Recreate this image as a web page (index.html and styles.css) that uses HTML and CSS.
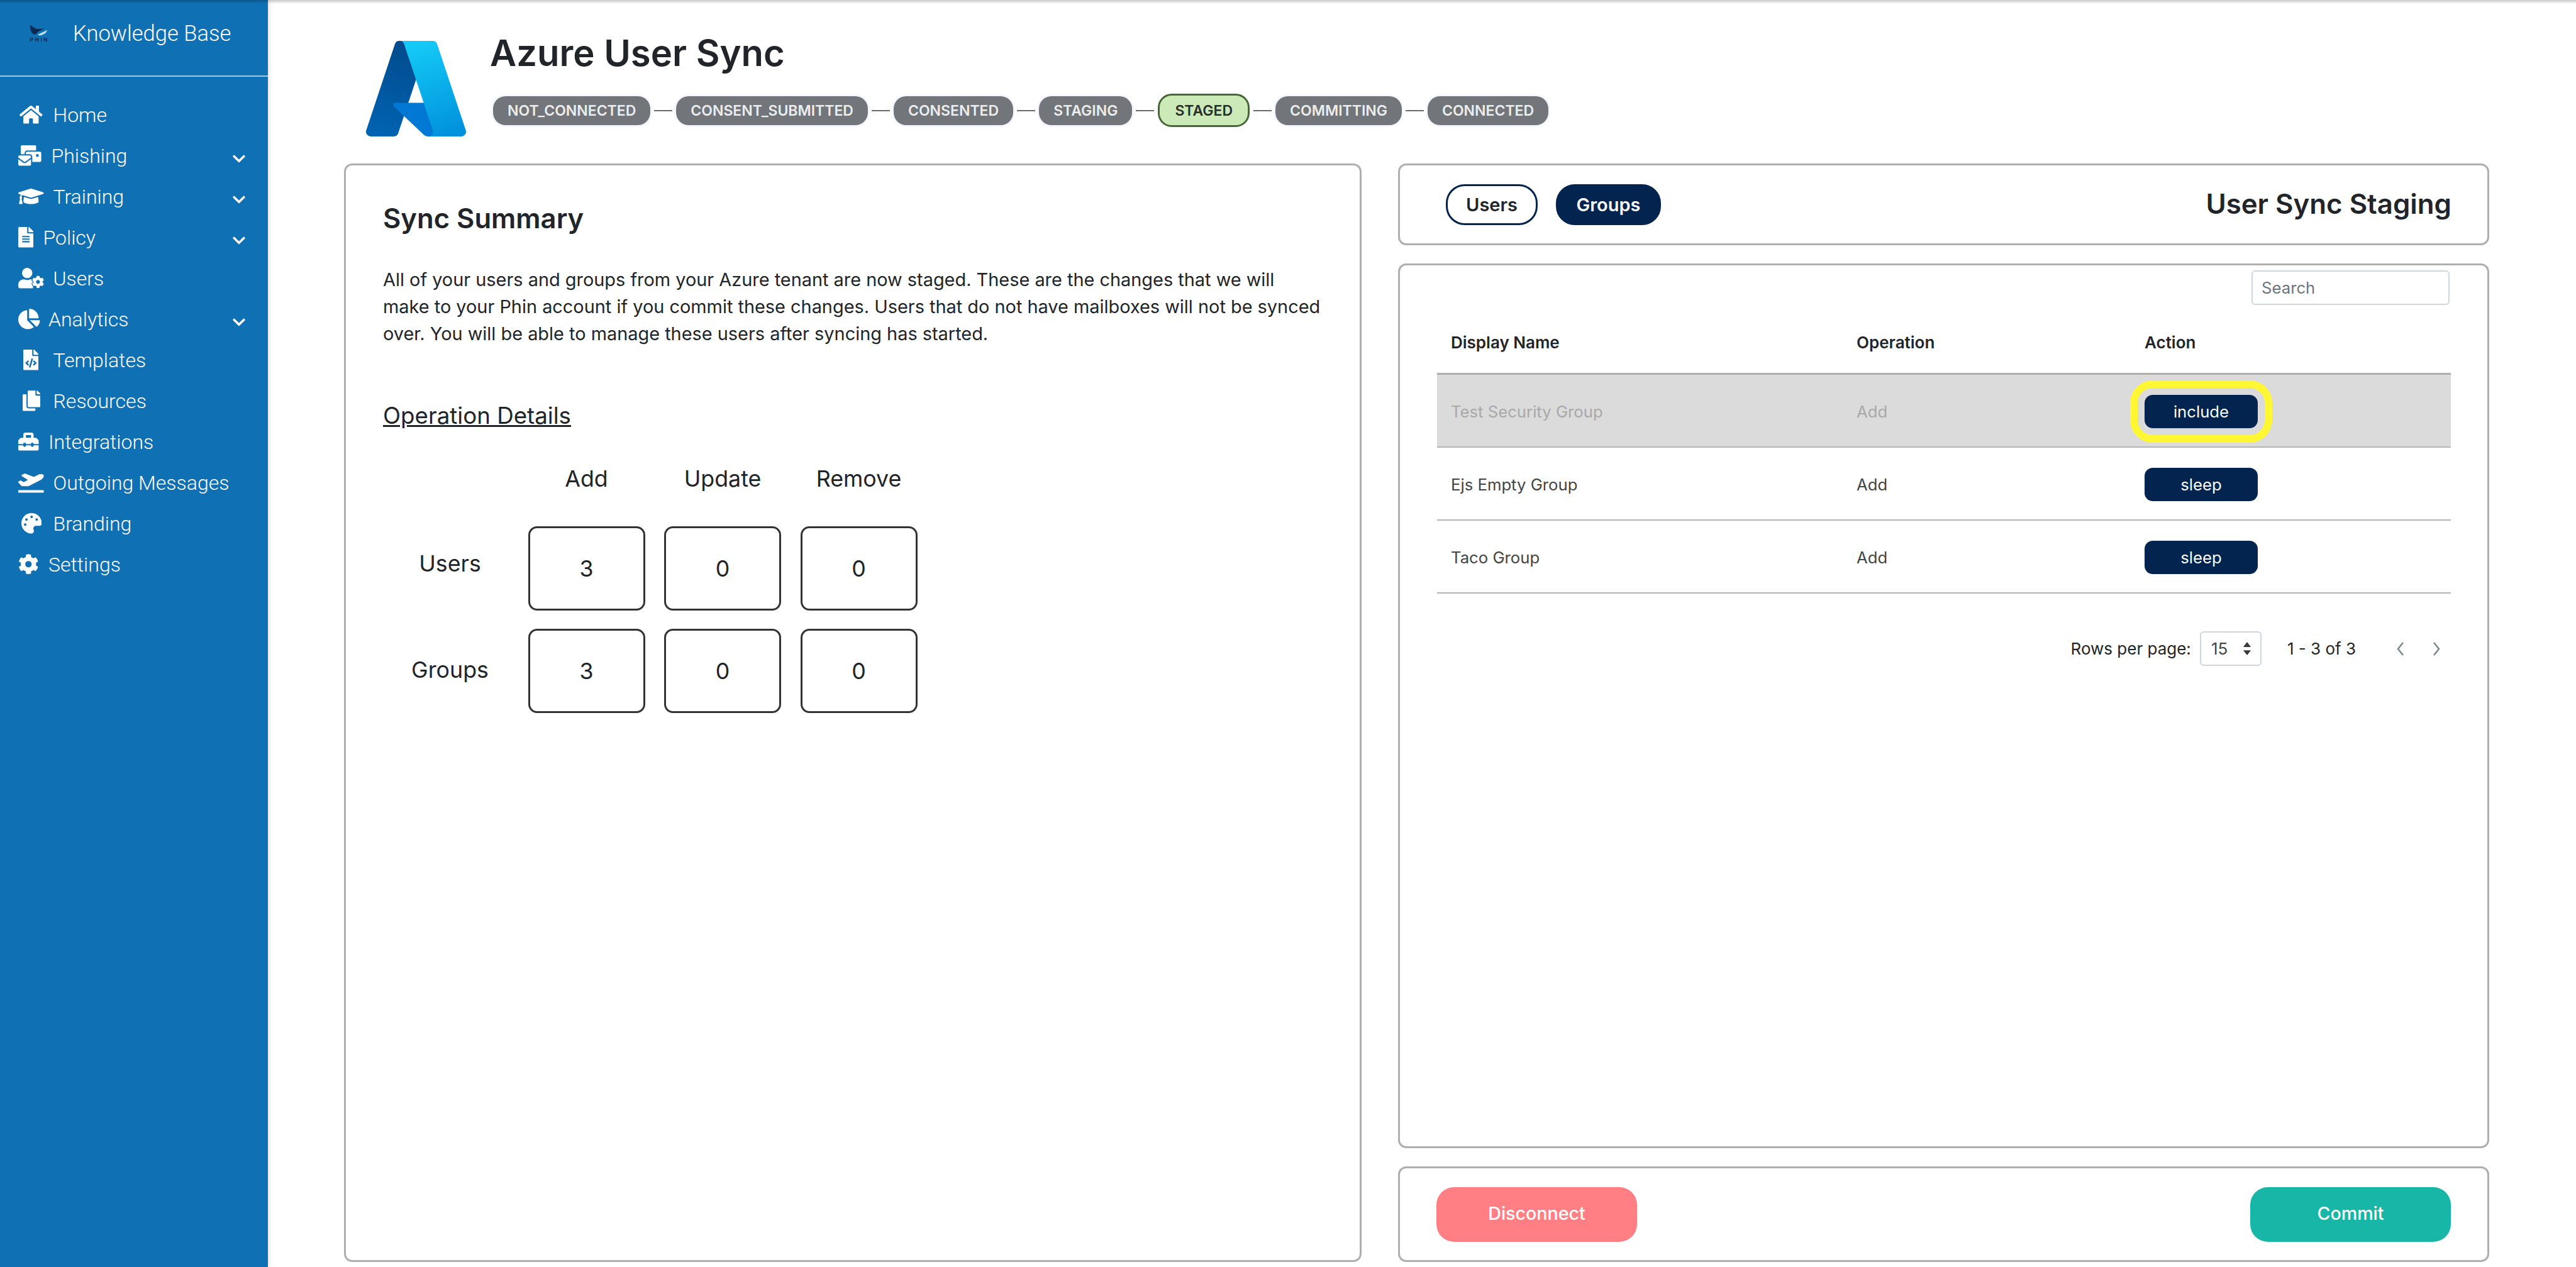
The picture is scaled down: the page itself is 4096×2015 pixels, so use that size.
FILE: index.html
```html
<!DOCTYPE html>
<html lang="en">
<head>
<meta charset="utf-8">
<title>Azure User Sync</title>
<link rel="stylesheet" href="styles.css">
</head>
<body>
<div class="app">
  <aside class="sidebar">
    <div class="brand">
      <svg class="brand-logo" viewBox="0 0 32 31">
        <path d="M.7.3L4.7 3.7 12 7.7h9.3L26 7l-5 2.7-5 2.3-5 5-2.3.7-4-2.4L2 10.3z" fill="#0c2a52"/>
        <path d="M14.7 17.7l6.6-3.4 10-4.6L28 15.3l-6.7 3.4-5.3.3z" fill="#bfe3e3"/>
        <text class="brand-mark" x="0.5" y="30" textLength="31">PHIN</text>
      </svg>
      <span class="brand-name">Knowledge Base</span>
    </div>
    <nav class="nav">
      <a class="nav-item"><span class="slot slot-l"><svg class="ico ind-xs" viewBox="0 0 576 512"><path d="M280.37 148.26L96 300.11V464a16 16 0 0 0 16 16l112.06-.29a16 16 0 0 0 15.92-16V368a16 16 0 0 1 16-16h64a16 16 0 0 1 16 16v95.64a16 16 0 0 0 16 16.05L464 480a16 16 0 0 0 16-16V300L295.67 148.26a12.19 12.19 0 0 0-15.3 0zM571.6 251.47L488 182.56V44.05a12 12 0 0 0-12-12h-56a12 12 0 0 0-12 12v72.61L318.47 43a48 48 0 0 0-61 0L4.34 251.47a12 12 0 0 0-1.6 16.9l25.5 31A12 12 0 0 0 45.15 301l235.22-193.74a12.19 12.19 0 0 1 15.3 0L530.9 301a12 12 0 0 0 16.9-1.6l25.5-31a12 12 0 0 0-1.7-16.93z"/></svg></span>Home</a>
      <a class="nav-item"><span class="slot slot-m"><svg class="ico" viewBox="0 0 576 512"><path d="M160 448c-25.6 0-51.2-22.4-64-32-64-44.8-83.2-60.8-96-70.4V480c0 17.67 14.33 32 32 32h256c17.67 0 32-14.33 32-32V345.6c-12.8 9.6-32 25.6-96 70.4-12.8 9.6-38.4 32-64 32zm128-192H32c-17.67 0-32 14.33-32 32v16c25.6 19.2 22.4 19.2 115.2 86.4 9.6 6.4 28.8 25.6 44.8 25.6s35.2-19.2 44.8-22.4c92.8-67.2 89.6-67.2 115.2-86.4V288c0-17.67-14.33-32-32-32zm256-96H224c-17.67 0-32 14.33-32 32v32h96c33.21 0 60.59 25.42 63.71 57.82l.29-.22V416h192c17.67 0 32-14.33 32-32V192c0-17.67-14.33-32-32-32zm-32 128h-64v-64h64v64zm-352-96c0-35.29 28.71-64 64-64h224V32c0-17.67-14.33-32-32-32H96C78.33 0 64 14.33 64 32v192h96v-32z"/></svg></span>Phishing<svg class="chev" viewBox="0 0 448 512"><path d="M207.029 381.476L12.686 187.132c-9.373-9.373-9.373-24.569 0-33.941l22.667-22.667c9.357-9.357 24.522-9.375 33.901-.04L224 284.505l154.745-154.021c9.379-9.335 24.544-9.317 33.901.04l22.667 22.667c9.373 9.373 9.373 24.569 0 33.941L240.971 381.476c-9.373 9.372-24.569 9.372-33.942 0z"/></svg></a>
      <a class="nav-item"><span class="slot slot-l"><svg class="ico" viewBox="0 0 640 512"><path d="M622.34 153.2L343.4 67.5c-15.2-4.67-31.6-4.67-46.79 0L17.66 153.2c-23.54 7.23-23.54 38.36 0 45.59l48.63 14.94c-10.67 13.19-17.23 29.28-17.88 46.9C38.78 266.15 32 276.11 32 288c0 10.78 5.68 19.85 13.86 25.65L20.33 428.53C18.11 438.52 25.71 448 35.94 448h56.11c10.24 0 17.84-9.48 15.62-19.47L82.14 313.65C90.32 307.85 96 298.78 96 288c0-11.57-6.47-21.25-15.66-26.87.76-15.02 8.44-28.3 20.69-36.72L296.6 284.5c9.06 2.78 26.44 6.25 46.79 0l278.95-85.7c23.55-7.24 23.55-38.36 0-45.6zM352.79 315.09c-28.53 8.76-52.84 3.92-65.59 0l-145.02-44.55L128 384c0 35.35 85.96 64 192 64s192-28.65 192-64l-14.18-113.47-145.03 44.56z"/></svg></span>Training<svg class="chev" viewBox="0 0 448 512"><path d="M207.029 381.476L12.686 187.132c-9.373-9.373-9.373-24.569 0-33.941l22.667-22.667c9.357-9.357 24.522-9.375 33.901-.04L224 284.505l154.745-154.021c9.379-9.335 24.544-9.317 33.901.04l22.667 22.667c9.373 9.373 9.373 24.569 0 33.941L240.971 381.476c-9.373 9.372-24.569 9.372-33.942 0z"/></svg></a>
      <a class="nav-item"><span class="slot slot-s"><svg class="ico" viewBox="0 0 384 512"><path d="M224 136V0H24C10.7 0 0 10.7 0 24v464c0 13.3 10.7 24 24 24h336c13.3 0 24-10.7 24-24V160H248c-13.2 0-24-10.8-24-24zm64 236c0 6.6-5.4 12-12 12H108c-6.6 0-12-5.4-12-12v-8c0-6.6 5.4-12 12-12h168c6.6 0 12 5.4 12 12v8zm0-64c0 6.6-5.4 12-12 12H108c-6.6 0-12-5.4-12-12v-8c0-6.6 5.4-12 12-12h168c6.6 0 12 5.4 12 12v8zm0-72v8c0 6.6-5.4 12-12 12H108c-6.6 0-12-5.4-12-12v-8c0-6.6 5.4-12 12-12h168c6.6 0 12 5.4 12 12zm96-114.1v6.1H256V0h6.1c6.4 0 12.5 2.5 17 7l97.9 98c4.5 4.5 7 10.6 7 16.9z"/></svg></span>Policy<svg class="chev" viewBox="0 0 448 512"><path d="M207.029 381.476L12.686 187.132c-9.373-9.373-9.373-24.569 0-33.941l22.667-22.667c9.357-9.357 24.522-9.375 33.901-.04L224 284.505l154.745-154.021c9.379-9.335 24.544-9.317 33.901.04l22.667 22.667c9.373 9.373 9.373 24.569 0 33.941L240.971 381.476c-9.373 9.372-24.569 9.372-33.942 0z"/></svg></a>
      <a class="nav-item"><span class="slot slot-l"><svg class="ico" viewBox="0 0 640 512"><path d="M224 256c70.7 0 128-57.3 128-128S294.7 0 224 0 96 57.3 96 128s57.3 128 128 128z"/><path d="M134.4 288h16.7c22.2 10.2 46.9 16 72.9 16s50.7-5.8 72.9-16h16.7c20 0 39 4.4 56 12.4V512H48c-26.5 0-48-21.5-48-48v-41.6C0 348.2 60.2 288 134.4 288z"/><path class="cog-gap" d="M610.5 373.3c2.6-14.1 2.6-28.5 0-42.6l25.8-14.9c3-1.7 4.3-5.2 3.3-8.5-6.7-21.6-18.2-41.2-33.2-57.4-2.3-2.5-6-3.1-9-1.4l-25.8 14.9c-10.9-9.3-23.4-16.5-36.9-21.3v-29.8c0-3.4-2.4-6.4-5.7-7.1-22.3-5-45-4.8-66.2 0-3.3.7-5.7 3.7-5.7 7.1v29.8c-13.5 4.8-26 12-36.9 21.3l-25.8-14.9c-2.9-1.7-6.7-1.1-9 1.4-15 16.2-26.5 35.8-33.2 57.4-1 3.3.4 6.8 3.3 8.5l25.8 14.9c-2.6 14.1-2.6 28.5 0 42.6l-25.8 14.9c-3 1.7-4.3 5.2-3.3 8.5 6.7 21.6 18.2 41.1 33.2 57.4 2.3 2.5 6 3.1 9 1.4l25.8-14.9c10.9 9.3 23.4 16.5 36.9 21.3v29.8c0 3.4 2.4 6.4 5.7 7.1 22.3 5 45 4.8 66.2 0 3.3-.7 5.7-3.7 5.7-7.1v-29.8c13.5-4.8 26-12 36.9-21.3l25.8 14.9c2.9 1.7 6.7 1.1 9-1.4 15-16.2 26.5-35.8 33.2-57.4 1-3.3-.4-6.8-3.3-8.5l-25.8-14.9zM496 400.5c-26.8 0-48.5-21.8-48.5-48.5s21.8-48.5 48.5-48.5 48.5 21.8 48.5 48.5-21.7 48.5-48.5 48.5z"/></svg></span>Users</a>
      <a class="nav-item"><span class="slot slot-n"><svg class="ico" viewBox="0 0 544 512"><path d="M527.79 288H290.5l158.03 158.03c6.04 6.04 15.98 6.53 22.19.68 38.7-36.46 65.32-85.61 73.13-140.86 1.34-9.46-6.51-17.85-16.06-17.85zm-15.83-64.8C503.72 103.74 408.26 8.28 288.8.04 279.68-.59 272 7.1 272 16.24V240h223.77c9.14 0 16.82-7.68 16.19-16.8zM224 288V50.71c0-9.55-8.39-17.4-17.84-16.06C86.99 51.49-4.1 155.6.14 280.37 4.5 408.51 114.83 513.59 243.03 511.98c50.4-.63 96.97-16.87 135.26-44.03 7.9-5.6 8.42-17.23 1.57-24.08L224 288z"/></svg></span>Analytics<svg class="chev" viewBox="0 0 448 512"><path d="M207.029 381.476L12.686 187.132c-9.373-9.373-9.373-24.569 0-33.941l22.667-22.667c9.357-9.357 24.522-9.375 33.901-.04L224 284.505l154.745-154.021c9.379-9.335 24.544-9.317 33.901.04l22.667 22.667c9.373 9.373 9.373 24.569 0 33.941L240.971 381.476c-9.373 9.372-24.569 9.372-33.942 0z"/></svg></a>
      <a class="nav-item"><span class="slot slot-l"><svg class="ico ind-l" viewBox="0 0 384 512"><path d="M384 121.941V128H256V0h6.059c6.365 0 12.47 2.529 16.971 7.029l97.941 97.941A24.002 24.002 0 0 1 384 121.941zM248 160c-13.2 0-24-10.8-24-24V0H24C10.745 0 0 10.745 0 24v464c0 13.255 10.745 24 24 24h336c13.255 0 24-10.745 24-24V160H248zM123.206 400.505a5.4 5.4 0 0 1-7.633.246l-64.866-60.812a5.4 5.4 0 0 1 0-7.879l64.866-60.812a5.4 5.4 0 0 1 7.633.246l19.579 20.885a5.4 5.4 0 0 1-.372 7.747L101.65 336l40.763 35.874a5.4 5.4 0 0 1 .372 7.747l-19.579 20.884zm51.295 50.479l-27.453-7.97a5.402 5.402 0 0 1-3.681-6.692l61.44-211.626a5.402 5.402 0 0 1 6.692-3.681l27.452 7.97a5.4 5.4 0 0 1 3.68 6.692l-61.44 211.626a5.397 5.397 0 0 1-6.69 3.681zm160.792-111.045l-64.866 60.812a5.4 5.4 0 0 1-7.633-.246l-19.58-20.885a5.4 5.4 0 0 1 .372-7.747L284.35 336l-40.763-35.874a5.4 5.4 0 0 1-.372-7.747l19.58-20.885a5.4 5.4 0 0 1 7.633-.246l64.866 60.812a5.4 5.4 0 0 1-.001 7.879z"/></svg></span>Templates</a>
      <a class="nav-item"><span class="slot slot-l"><svg class="ico ind-m" viewBox="0 0 448 512"><path d="M320 448v40c0 13.255-10.745 24-24 24H24c-13.255 0-24-10.745-24-24V120c0-13.255 10.745-24 24-24h72v296c0 30.879 25.121 56 56 56h168zm0-344V0H152c-13.255 0-24 10.745-24 24v368c0 13.255 10.745 24 24 24h272c13.255 0 24-10.745 24-24V128H344c-13.2 0-24-10.8-24-24zm120.971-31.029L375.029 7.029A24 24 0 0 0 358.059 0H352v96h96v-6.059a24 24 0 0 0-7.029-16.97z"/></svg></span>Resources</a>
      <a class="nav-item"><span class="slot slot-n"><svg class="ico" viewBox="0 0 512 512"><path d="M502.63 214.63l-45.25-45.25c-6-6-14.14-9.37-22.63-9.37H384V80c0-26.51-21.49-48-48-48H176c-26.51 0-48 21.49-48 48v80H77.25c-8.49 0-16.62 3.37-22.63 9.37L9.37 214.63c-6 6-9.37 14.14-9.37 22.63V320h128v-16c0-8.84 7.16-16 16-16h32c8.84 0 16 7.16 16 16v16h128v-16c0-8.84 7.16-16 16-16h32c8.84 0 16 7.16 16 16v16h128v-82.75c0-8.48-3.37-16.62-9.37-22.62zM320 160H192V96h128v64zm64 208c0 8.84-7.16 16-16 16h-32c-8.84 0-16-7.16-16-16v-16H192v16c0 8.84-7.16 16-16 16h-32c-8.84 0-16-7.16-16-16v-16H0v96c0 17.67 14.33 32 32 32h448c17.67 0 32-14.33 32-32v-96H384v16z"/></svg></span>Integrations</a>
      <a class="nav-item"><span class="slot slot-l"><svg class="ico" viewBox="0 0 640 512"><path d="M624 448H16c-8.84 0-16 7.16-16 16v32c0 8.84 7.16 16 16 16h608c8.84 0 16-7.16 16-16v-32c0-8.84-7.16-16-16-16zM80.55 341.27c6.28 6.84 15.1 10.72 24.33 10.71l130.54-.18a65.62 65.62 0 0 0 29.64-7.12l290.96-147.65c26.74-13.57 50.71-32.94 67.02-58.31 18.31-28.48 20.3-49.09 13.07-63.65-7.21-14.57-24.74-25.27-58.25-27.45-29.85-1.94-59.54 5.92-86.28 19.48l-98.51 49.99-218.7-82.06a17.799 17.799 0 0 0-18-1.11L90.62 67.29c-10.67 5.41-13.25 19.65-5.17 28.53l156.22 98.1-103.21 52.38-72.35-36.47a17.804 17.804 0 0 0-16.07.02L9.91 230.22c-10.44 5.3-13.19 19.12-5.57 28.08l76.21 82.97z"/></svg></span>Outgoing Messages</a>
      <a class="nav-item"><span class="slot slot-l"><svg class="ico ind-s" viewBox="0 0 512 512"><path d="M204.3 5C104.9 24.4 24.8 104.3 5.2 203.4c-37 187 131.7 326.4 258.8 306.7 41.2-6.4 61.4-54.6 42.5-91.7-23.1-45.4 9.9-98.4 60.9-98.4h79.7c35.8 0 64.8-29.6 64.9-65.3C511.5 97.1 368.1-26.9 204.3 5zM96 320c-17.7 0-32-14.3-32-32s14.3-32 32-32 32 14.3 32 32-14.3 32-32 32zm32-128c-17.7 0-32-14.3-32-32s14.3-32 32-32 32 14.3 32 32-14.3 32-32 32zm128-64c-17.7 0-32-14.3-32-32s14.3-32 32-32 32 14.3 32 32-14.3 32-32 32zm128 64c-17.7 0-32-14.3-32-32s14.3-32 32-32 32 14.3 32 32-14.3 32-32 32z"/></svg></span>Branding</a>
      <a class="nav-item"><span class="slot slot-n"><svg class="ico" viewBox="0 0 512 512"><path d="M487.4 315.7l-42.6-24.6c4.3-23.2 4.3-47 0-70.2l42.6-24.6c4.9-2.8 7.1-8.6 5.5-14-11.1-35.6-30-67.8-54.7-94.6-3.8-4.1-10-5.1-14.8-2.3L380.8 110c-17.9-15.4-38.5-27.3-60.8-35.1V25.8c0-5.6-3.9-10.5-9.4-11.7-36.7-8.2-74.3-7.8-109.2 0-5.5 1.2-9.4 6.1-9.4 11.7V75c-22.2 7.9-42.8 19.8-60.8 35.1L88.7 85.5c-4.9-2.8-11-1.9-14.8 2.3-24.7 26.7-43.6 58.9-54.7 94.6-1.7 5.4.6 11.2 5.5 14L67.3 221c-4.3 23.2-4.3 47 0 70.2l-42.6 24.6c-4.9 2.8-7.1 8.6-5.5 14 11.1 35.6 30 67.8 54.7 94.6 3.8 4.1 10 5.1 14.8 2.3l42.6-24.6c17.9 15.4 38.5 27.3 60.8 35.1v49.2c0 5.6 3.9 10.5 9.4 11.7 36.7 8.2 74.3 7.8 109.2 0 5.5-1.2 9.4-6.1 9.4-11.7v-49.2c22.2-7.9 42.8-19.8 60.8-35.1l42.6 24.6c4.9 2.8 11 1.9 14.8-2.3 24.7-26.7 43.6-58.9 54.7-94.6 1.5-5.5-.7-11.3-5.6-14.1zM256 336c-44.1 0-80-35.9-80-80s35.9-80 80-80 80 35.9 80 80-35.9 80-80 80z"/></svg></span>Settings</a>
    </nav>
  </aside>
  <main class="main">
    <header class="page-head">
      <svg class="azure-logo" viewBox="4 6.5 88 83" preserveAspectRatio="none">
        <defs>
          <linearGradient id="az-left" gradientUnits="userSpaceOnUse" x1="58.97" y1="12.69" x2="31.93" y2="92.02"><stop offset="0" stop-color="#004a8c"/><stop offset="1" stop-color="#0063b1"/></linearGradient>
          <linearGradient id="az-right" gradientUnits="userSpaceOnUse" x1="55" y1="8" x2="84" y2="88"><stop offset="0" stop-color="#14c9f6"/><stop offset="1" stop-color="#0090dc"/></linearGradient>
        </defs>
        <path d="M33.338 6.544h26.038l-27.03 80.087a4.152 4.152 0 0 1-3.933 2.824H8.149a4.145 4.145 0 0 1-3.928-5.47L29.404 9.368a4.152 4.152 0 0 1 3.934-2.825z" fill="url(#az-left)"/>
        <path d="M71.175 60.261h-41.29a1.911 1.911 0 0 0-1.305 3.309l26.532 24.764a4.171 4.171 0 0 0 2.846 1.121h23.38z" fill="#0078d4"/>
        <path d="M66.595 9.364a4.145 4.145 0 0 0-3.928-2.82H33.648a4.146 4.146 0 0 1 3.928 2.82l25.184 74.62a4.146 4.146 0 0 1-3.928 5.472h29.02a4.146 4.146 0 0 0 3.927-5.472z" fill="url(#az-right)"/>
      </svg>
      <div class="head-text">
        <h1 class="page-title">Azure User Sync</h1>
        <div class="stepper">
          <span class="pill">NOT_CONNECTED</span><i class="link"></i>
          <span class="pill">CONSENT_SUBMITTED</span><i class="link"></i>
          <span class="pill">CONSENTED</span><i class="link"></i>
          <span class="pill">STAGING</span><i class="link"></i>
          <span class="pill pill-active">STAGED</span><i class="link"></i>
          <span class="pill">COMMITTING</span><i class="link"></i>
          <span class="pill">CONNECTED</span>
        </div>
      </div>
    </header>
    <div class="content">
      <section class="card summary">
        <h2 class="summary-title">Sync Summary</h2>
        <p class="summary-copy">All of your users and groups from your Azure tenant are now staged. These are the changes that we will<br>make to your Phin account if you commit these changes. Users that do not have mailboxes will not be synced<br>over. You will be able to manage these users after syncing has started.</p>
        <h3 class="details-title">Operation Details</h3>
        <div class="ops">
          <span></span><span class="ops-head">Add</span><span class="ops-head">Update</span><span class="ops-head">Remove</span>
          <span class="ops-label ops-label-users">Users</span><span class="ops-box">3</span><span class="ops-box">0</span><span class="ops-box">0</span>
          <span class="ops-label ops-label-groups">Groups</span><span class="ops-box">3</span><span class="ops-box">0</span><span class="ops-box">0</span>
        </div>
      </section>
      <div class="side">
        <section class="card tabs-card">
          <div class="tabs">
            <button class="tab">Users</button>
            <button class="tab tab-on">Groups</button>
          </div>
          <h2 class="tabs-title">User Sync Staging</h2>
        </section>
        <section class="card table-card">
          <div class="search-row"><input class="search" placeholder="Search"></div>
          <table class="grid">
            <thead>
              <tr><th class="col-name">Display Name</th><th class="col-op">Operation</th><th>Action</th></tr>
            </thead>
            <tbody>
              <tr class="row-off"><td>Test Security Group</td><td>Add</td><td><button class="act act-ring">include</button></td></tr>
              <tr><td>Ejs Empty Group</td><td>Add</td><td><button class="act">sleep</button></td></tr>
              <tr><td>Taco Group</td><td>Add</td><td><button class="act">sleep</button></td></tr>
            </tbody>
          </table>
          <div class="pager">
            <span class="pager-label">Rows per page:</span>
            <span class="pager-select">15<svg class="updown" viewBox="0 0 16 24"><path d="M8 0l7 9H1zM8 24l-7-9h14z"/></svg></span>
            <span class="pager-range">1 - 3 of 3</span>
            <svg class="pager-chev" viewBox="0 0 14 22"><path d="M11 1L3 11l8 10"/></svg>
            <svg class="pager-chev pager-next" viewBox="0 0 14 22"><path d="M3 1l8 10L3 21"/></svg>
          </div>
        </section>
        <section class="card actions-card">
          <button class="big big-red">Disconnect</button>
          <button class="big big-teal">Commit</button>
        </section>
      </div>
    </div>
  </main>
</div>
</body>
</html>
```
FILE: styles.css
```css
* { box-sizing: border-box; }
html, body { margin: 0; height: 100%; overflow: hidden; background: #fff; }
body { font-family: "Inter", "Liberation Sans", sans-serif; color: #212529; }
body::before { content: ""; position: absolute; left: 0; right: 0; top: 0; height: 6px; z-index: 5; background: linear-gradient(rgba(0,0,0,.22), rgba(0,0,0,0)); }
.app { display: flex; height: 100vh; }

.sidebar { width: 426px; flex: none; background: #0f70b4; color: #fff; font-family: "Roboto", sans-serif; font-weight: 300; box-shadow: 3px 0 6px rgba(0,0,0,.1); }
.brand { height: 122px; border-bottom: 2px solid #9fcbe7; display: flex; align-items: flex-start; padding: 39px 0 0 47px; }
.brand-logo { width: 29px; height: 28px; flex: none; margin-right: 40px; overflow: visible; }
.brand-mark { font: 700 9.5px "Liberation Sans", sans-serif; fill: #0c2a52; }
.brand-name { font-size: 34.6px; line-height: 28px; white-space: nowrap; }
.nav { padding-top: 28px; }
.nav-item { height: 65px; display: flex; align-items: center; padding: 0 36px 0 29px; font-size: 32px; white-space: nowrap; }
.slot { flex: none; display: flex; align-items: center; }
.slot-l { width: 55.5px; }
.slot-m { width: 52.5px; }
.slot-n { width: 48px; }
.slot-s { width: 39.5px; }
.ico { height: 32.5px; fill: #fff; flex: none; }
.ind-xs { margin-left: 2px; }
.ind-s { margin-left: 4.5px; }
.ind-m { margin-left: 6.5px; }
.ind-l { margin-left: 8px; }
.cog-gap { stroke: #0f70b4; stroke-width: 36px; paint-order: stroke; }
.chev { width: 20px; height: 23px; fill: #fff; margin: 10px 0 0 auto; flex: none; }

.main { flex: 1; min-width: 0; display: flex; flex-direction: column; padding: 0 138px 8px 121px; }
.page-head { height: 260px; flex: none; display: flex; align-items: flex-start; padding: 49px 0 0 35px; }
.azure-logo { width: 159px; height: 152px; flex: none; margin: 16px 38px 0 0; }
.page-title { margin: 0; font-size: 58px; line-height: 70px; font-weight: 600; color: #212529; }
.stepper { display: flex; align-items: center; margin: 30px 0 0 5px; }
.pill { height: 46px; display: flex; align-items: center; padding: 0 23px; border-radius: 20px; background: #72757a; color: #eceded; font-size: 23px; font-weight: 600; box-shadow: 0 0 0 3px #f6f7fe; white-space: nowrap; }
.pill-active { height: 53px; padding: 0 24px; background: #cbeab8; border: 3px solid #46673a; color: #2c2c2c; box-shadow: none; border-radius: 22px; }
.link { width: 29px; height: 2px; margin: 0 6px; background: #6b6b6b; flex: none; }

.content { flex: 1; min-height: 0; display: grid; grid-template-columns: 1618px 1735px; column-gap: 58px; }
.card { background: #fff; border: 3px solid #b0afad; border-radius: 13px; }
.summary { padding: 60px 59px 0; }
.summary-title { margin: 0; font-size: 43.6px; line-height: 50px; font-weight: 600; }
.summary-copy { margin: 50px -30px 0 0; font-size: 28.9px; line-height: 43px; }
.details-title { margin: 87px 0 0; font-size: 36.7px; line-height: 44px; font-weight: 400; text-decoration: underline; }
.ops { display: grid; grid-template-columns: 200px repeat(3, 186px); column-gap: 30.5px; row-gap: 28.5px; margin-top: 56px; font-size: 35.75px; }
.ops-head { text-align: center; line-height: 44px; margin-bottom: 25.5px; }
.ops-label { align-self: center; text-align: center; padding-left: 13px; }
.ops-label-users { padding-bottom: 16px; }
.ops-label-groups { padding-bottom: 4px; }
.ops-box { height: 134px; display: flex; align-items: center; justify-content: center; border: 3px solid #333; border-radius: 14px; }

.side { display: flex; flex-direction: column; gap: 29px; min-height: 0; }
.tabs-card { height: 130px; flex: none; display: flex; align-items: center; justify-content: space-between; padding: 0 57px 0 73px; }
.tabs { display: flex; gap: 29px; }
.tab { height: 65px; padding: 0; width: 146px; border: 3px solid #02244f; border-radius: 30px; background: #fff; color: #212529; font: 600 29px "Inter", sans-serif; }
.tab-on { width: 167px; background: #02244f; color: #fff; }
.tabs-title { margin: 0; font-size: 43.8px; line-height: 50px; font-weight: 600; }

.table-card { flex: 1; min-height: 0; padding: 8px 58px 0 59px; }
.search-row { display: flex; justify-content: flex-end; padding-right: 2px; }
.search { width: 315px; height: 55px; padding: 0 14px; border: 2px solid #cfd6dc; border-radius: 6px; font: 400 25.7px "Inter", sans-serif; outline: none; }
.search::placeholder { color: #6c757d; }
.grid { width: 100%; border-collapse: separate; border-spacing: 0; table-layout: fixed; font-size: 25.7px; }
.grid th { height: 111px; padding: 11px 0 0 22px; text-align: left; font-weight: 600; font-size: 26px; border-bottom: 3px solid #b0afad; }
.col-name { width: 645px; }
.col-op { width: 458px; }
.grid td { height: 116px; padding: 3px 0 0 22px; border-bottom: 2px solid #b5b4b3; color: #444; }
.row-off td { background: #dcdbdc; color: #a9a8a9; }
.act { display: block; width: 180px; height: 53px; padding: 0; border: 0; border-radius: 13px; background: #02244f; color: #fff; font: 400 25.7px "Inter", sans-serif; }
.act-ring { outline: 12px solid #fff634; outline-offset: 11px; }
.pager { display: flex; align-items: center; justify-content: flex-end; margin-top: 60px; padding-right: 16px; font-size: 26px; }
.pager-label { margin-right: 14px; }
.pager-select { width: 98px; height: 55px; display: flex; align-items: center; justify-content: space-between; padding: 0 14px 0 16px; border: 2px solid #cfd6dc; border-radius: 6px; margin-right: 41px; color: #444; }
.updown { width: 14px; height: 21px; fill: #343a40; }
.pager-range { margin-right: 64px; }
.pager-chev { width: 14px; height: 22px; fill: none; stroke: #7b8a97; stroke-width: 2.6px; }
.pager-next { margin-left: 43px; }

.actions-card { height: 152px; flex: none; display: flex; align-items: center; justify-content: space-between; padding: 0 58px 0 58px; }
.big { width: 319px; height: 87px; padding: 0 0 3px; border: 0; border-radius: 28px; color: #fff; font: 500 28.6px "Inter", sans-serif; }
.big-red { background: #ff7f85; }
.big-teal { background: #17b6a6; }
```
